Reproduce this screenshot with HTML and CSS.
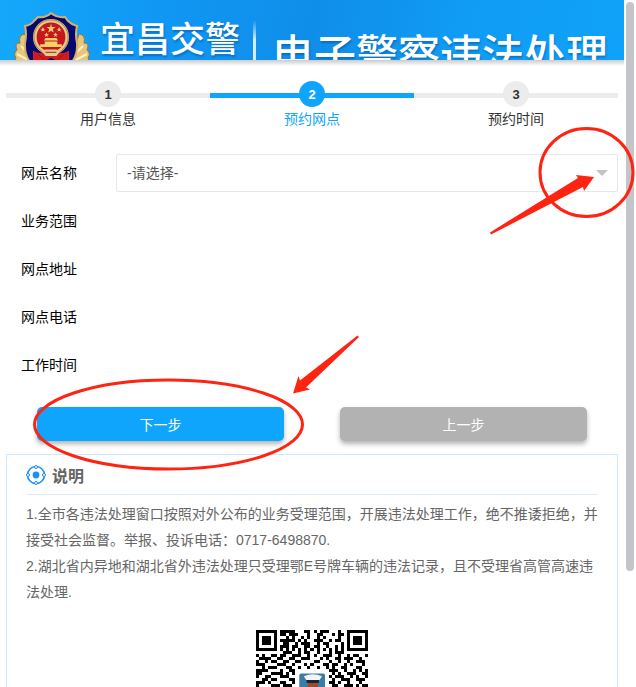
FILE: index.html
```html
<!DOCTYPE html>
<html lang="zh-CN">
<head>
<meta charset="UTF-8">
<meta name="viewport" content="width=device-width, initial-scale=1.0">
<title>宜昌交警 电子警察违法处理</title>
<link rel="stylesheet" href="styles.css">
</head>
<body>
<div class="page">
  <header class="banner">
    <!-- police emblem -->
    <svg class="emblem" viewBox="0 0 76 66" aria-hidden="true">
      <g fill="#e5c67f" stroke="#9b7634" stroke-width="1">
        <path d="M11 22Q4 23 6 31Q0 31 3 38Q-1 41 2 46Q-1 52 6 53Q8 61 20 61L34 65L18 46Z"/>
        <path d="M65 22Q72 23 70 31Q76 31 73 38Q77 41 74 46Q77 52 70 53Q68 61 56 61L42 65L58 46Z"/>
      </g>
      <path d="M7 34L18 45M3 42L20 51M6 51L22 56M69 34L58 45M73 42L56 51M70 51L54 56" stroke="#fff0bd" stroke-width="2" fill="none"/>
      <path d="M37 1Q43 6 51 5L54 9Q58 13 63 14Q61 22 63 31Q64 48 52 55L37 64L22 55Q10 48 11 31Q13 22 11 14Q17 13 20 9L24 5Q32 6 37 1Z" fill="#08096f" stroke="#d4b269" stroke-width="2"/>
      <g transform="translate(3.700 0.700) scale(0.900)">
        <circle cx="37" cy="27" r="18" fill="#c41720" stroke="#e9c987" stroke-width="4"/>
        <circle cx="37" cy="27" r="19" fill="none" stroke="#a57e3d" stroke-width="1"/>
        <g fill="#f6d168">
          <path d="M37 12L38 16H42L39 18L40 22L37 20L34 22L35 18L32 16H36Z"/>
          <path d="M28 16l1 2h2l-2 1 1 2-2-1-2 1 1-2-2-1h2zM46 16l1 2h2l-2 1 1 2-2-1-2 1 1-2-2-1h2zM32 22l1 2h2l-2 1 1 2-2-1-2 1 1-2-2-1h2zM42 22l1 2h2l-2 1 1 2-2-1-2 1 1-2-2-1h2z"/>
          <path d="M31 28H43L45 31H29ZM30 32H44V35H49V38H25V35H30Z"/>
        </g>
        <path d="M17 42Q25 47 30 43H44Q49 47 57 42V53L46 55L37 50L28 55L17 53Z" fill="#cf1c21"/>
        <path d="M27 43L31 41H43L47 43L43 48H31Z" fill="#e9c987"/>
        <path d="M31 44H43M23 47L30 52M51 47L44 52" stroke="#8f1b19" stroke-width="1"/>
      </g>
    </svg>
    <h1 class="brand">宜昌交警</h1>
    <span class="banner-line"></span>
    <p class="slogan">电子警察违法处理</p>
  </header>

  <main class="content">
    <ol class="steps">
      <li class="step"><span class="step-num">1</span><span class="step-text">用户信息</span></li>
      <li class="step active" aria-current="step"><span class="step-num">2</span><span class="step-text">预约网点</span></li>
      <li class="step"><span class="step-num">3</span><span class="step-text">预约时间</span></li>
    </ol>

    <form class="form">
      <div class="row">
        <label class="row-label" for="site">网点名称</label>
        <div class="select-box">
          <select id="site" name="site">
            <option>-请选择-</option>
          </select>
        </div>
      </div>
      <div class="row"><span class="row-label">业务范围</span></div>
      <div class="row"><span class="row-label">网点地址</span></div>
      <div class="row"><span class="row-label">网点电话</span></div>
      <div class="row"><span class="row-label">工作时间</span></div>
      <div class="buttons">
        <button class="btn btn-next" type="button">下一步</button>
        <button class="btn btn-prev" type="button">上一步</button>
      </div>
    </form>

    <section class="notice">
      <h2 class="notice-title">
        <svg class="notice-icon" viewBox="0 0 20 20" aria-hidden="true">
          <circle cx="10" cy="10" r="8.500" fill="none" stroke="#1890ff" stroke-width="1.600"/>
          <circle cx="10" cy="10" r="3.400" fill="#1890ff"/>
          <g fill="#fff" stroke="#1890ff" stroke-width="1">
            <circle cx="10" cy="2" r="1.500"/><circle cx="18" cy="10" r="1.500"/>
            <circle cx="10" cy="18" r="1.500"/><circle cx="2" cy="10" r="1.500"/>
          </g>
        </svg>
        说明
      </h2>
      <div class="notice-text">
        <p>1.全市各违法处理窗口按照对外公布的业务受理范围，开展违法处理工作，绝不推诿拒绝，并接受社会监督。举报、投诉电话：0717-6498870.</p>
        <p>2.湖北省内异地和湖北省外违法处理只受理鄂E号牌车辆的违法记录，且不受理省高管高速违法处理.</p>
      </div>
      <svg class="qrcode" viewBox="0 0 37 37" role="img" aria-label="二维码" shape-rendering="crispEdges">
        <!-- finder patterns -->
        <path d="M0 0h7v7H0zM1 1v5h5V1zM2 2h3v3H2zM30 0h7v7h-7zM31 1v5h5V1zM32 2h3v3h-3zM0 30h7v7H0zM1 31v5h5v-5zM2 32h3v3H2z" fill-rule="evenodd"/>
        <!-- data modules, one line of strokes for each row -->
        <path fill="none" stroke="#000" stroke-width="1" d="
          M8 .5h5M16 .5h2M19 .5h1M21 .5h3M27 .5h1
          M8 1.5h2M11 1.5h3M17 1.5h1M20 1.5h2M25 1.5h1M27 1.5h2
          M10 2.5h1M12 2.5h1M15 2.5h1M17 2.5h1M20 2.5h1M22 2.5h1M27 2.5h1
          M8 3.5h5M14 3.5h1M16 3.5h1M19 3.5h3M24 3.5h1M26 3.5h2
          M9 4.5h2M13 4.5h1M15 4.5h3M20 4.5h1M22 4.5h2M28 4.5h1
          M8 5.5h3M12 5.5h2M16 5.5h2M19 5.5h2M23 5.5h1M26 5.5h1M28 5.5h1
          M8 6.5h1M10 6.5h1M12 6.5h1M14 6.5h1M16 6.5h1M18 6.5h1M20 6.5h1M22 6.5h1M24 6.5h1M26 6.5h1M28 6.5h1
          M9 7.5h3M14 7.5h1M16 7.5h2M20 7.5h1M24 7.5h1M26 7.5h3
          M0 8.5h1M2 8.5h1M5 8.5h2M8 8.5h2M12 8.5h3M17 8.5h1M19 8.5h1M22 8.5h3M27 8.5h1M30 8.5h1M32 8.5h2M36 8.5h1
          M1 9.5h4M7 9.5h2M11 9.5h2M15 9.5h3M21 9.5h1M23 9.5h1M26 9.5h2M29 9.5h3M34 9.5h1
          M0 10.5h1M3 10.5h1M5 10.5h2M9 10.5h2M13 10.5h2M19 10.5h2M24 10.5h1M27 10.5h1M30 10.5h1M33 10.5h3
          M0 11.5h3M7 11.5h3M12 11.5h1M16 11.5h1M18 11.5h1M22 11.5h2M25 11.5h2M29 11.5h1M31 11.5h1M35 11.5h1
          M2 12.5h1M4 12.5h3M10 12.5h2M14 12.5h1M17 12.5h1M20 12.5h1M23 12.5h1M25 12.5h1M28 12.5h2M33 12.5h2
          M0 13.5h4M8 13.5h1M11 13.5h2M24 13.5h3M29 13.5h1M32 13.5h1M34 13.5h1M36 13.5h1
          M0 14.5h2M5 14.5h4M10 14.5h1M12 14.5h1M25 14.5h1M27 14.5h1M30 14.5h3M35 14.5h2
          M0 15.5h1M3 15.5h2M8 15.5h3M24 15.5h1M26 15.5h3M31 15.5h1M33 15.5h1M36 15.5h1
          M2 16.5h2M5 16.5h2M11 16.5h2M25 16.5h1M28 16.5h3M33 16.5h3
          M0 17.5h3M4 17.5h1M8 17.5h2M12 17.5h1M24 17.5h2M27 17.5h1M30 17.5h1M34 17.5h1
          M0 18.5h1M5 18.5h3M9 18.5h3M25 18.5h2M29 18.5h3M33 18.5h1M35 18.5h2
          M1 19.5h3M7 19.5h1M11 19.5h2M24 19.5h1M27 19.5h3M32 19.5h2
          M0 20.5h2M5 20.5h2M9 20.5h2M25 20.5h3M30 20.5h1M34 20.5h3
          M3 21.5h1M5 21.5h4M11 21.5h1M24 21.5h2M28 21.5h2M33 21.5h1
          M0 22.5h1M2 22.5h2M8 22.5h1M10 22.5h2M26 22.5h1M29 22.5h4M35 22.5h1"/>
        <!-- officer portrait -->
        <g shape-rendering="auto">
          <rect x="13.5" y="13.7" width="10" height="10" rx="1" fill="#fff"/>
          <rect x="14.3" y="14.4" width="8.5" height="8.5" rx=".6" fill="#3b7ba5"/>
          <path d="M17 16.5h3.6l-.3 3.5-1.4 1-1.5-1z" fill="#9b4b2b"/>
          <path d="M16.6 16.2h4.2v1.3h-4z" fill="#182535"/>
          <path d="M15.8 15.3q3-1.4 6 0l-.8 1.2h-4.4z" fill="#f2f5f5"/>
          <path d="M15.5 22.9q.2-2.7 2.3-3.3h2.2q2 .6 2.2 3.3z" fill="#142b35"/>
        </g>
      </svg>
    </section>
  </main>
</div>

<div class="scroll-thumb"></div>

<!-- red guide marks over the form -->
<svg class="marks" width="636" height="687" viewBox="0 0 636 687" aria-hidden="true">
  <g fill="none" stroke="#ff2312" stroke-width="3">
    <ellipse cx="586.5" cy="172.500" rx="46.500" ry="44"/>
    <ellipse cx="168.500" cy="424.500" rx="134" ry="44.500"/>
  </g>
  <g fill="#ff2312">
    <path d="M490 232.500L578 178L576 175L594 177L584 191L583 187L491 234.500Z"/>
    <path d="M357.500 335.500L359 337L306 387.500L310 389.500L293 393.500L298.500 376L300 380.500Z"/>
  </g>
</svg>
</body>
</html>
```
FILE: styles.css
```css
* {
  box-sizing: border-box;
}

html, body {
  margin: 0;
  height: 100%;
  overflow: hidden;
}

body {
  background: #fff;
  color: #333;
  font-family: "Liberation Sans", "Noto Sans CJK SC", sans-serif;
  font-size: 14px;
}

h1, h2, p, ol {
  margin: 0;
  padding: 0;
}

/* room on the right for the scrollbar */
.page {
  padding-right: 12px;
}

/* Banner */
.banner {
  display: flex;
  align-items: flex-start;
  height: 60px;
  padding-left: 14px;
  overflow: hidden;
  color: #fff;
  background: linear-gradient(100deg, #14a9fb, #1097f4 25%, #0f8ee9 50%, #109cf5 75%, #10a2fa);
  text-shadow: 1px 2px 2px rgba(0, 60, 130, 0.4);
}

/* shadow sits below the clipped banner */
.content::before {
  content: "";
  display: block;
  height: 6px;
  margin: 0 -6px;
  background: linear-gradient(#cbcbcb, #fff);
}

.emblem {
  flex: none;
  width: 76px;
  height: 66px;
  margin-top: 12px;
}

.brand {
  flex: none;
  margin: 20px 0 0 10px;
  font-size: 35px;
  font-weight: 500;
  line-height: 40px;
}

.banner-line {
  flex: none;
  width: 3px;
  height: 40px;
  margin: 20px 16px 0 13px;
  background: linear-gradient(transparent, #d5efff 50%);
}

.slogan {
  flex: none;
  margin-top: 32px;
  font-size: 42px;
  font-weight: 500;
  line-height: 48px;
  white-space: nowrap;
}

.content {
  padding: 0 6px;
}

/* Steps */
.steps {
  display: flex;
  margin-top: 15px;
  list-style: none;
}

.step {
  flex: 1;
  display: flex;
  flex-direction: column;
  align-items: center;
  background: linear-gradient(#ececec, #ececec) 0 12px / 100% 5px no-repeat;
}

.step-num {
  width: 26px;
  height: 26px;
  border-radius: 50%;
  background: #ececec;
  font-size: 13px;
  font-weight: bold;
  line-height: 28px;
  text-align: center;
}

.step-text {
  line-height: 24px;
}

.step.active {
  color: #10a5fd;
  background-image: linear-gradient(#10a5fd, #10a5fd);
}

.step.active .step-num {
  background: #10a5fd;
  color: #fff;
}

/* Form */
.form {
  padding-top: 23px;
}

.row {
  display: flex;
  align-items: center;
  height: 38px;
  margin-bottom: 10px;
}

.row-label {
  width: 110px;
  padding: 0 0 2px 15px;
  color: #000;
}

.select-box {
  position: relative;
  flex: 1;
}

.select-box select {
  display: block;
  width: 100%;
  height: 38px;
  padding: 0 30px 0 10px;
  border: 1px solid #e6e6e6;
  border-radius: 2px;
  background: #fff;
  color: #555;
  font: inherit;
  appearance: none;
}

.select-box::after {
  content: "";
  position: absolute;
  top: 16px;
  right: 10px;
  border: 6px solid transparent;
  border-top-color: #c2c2c2;
  border-bottom: 0;
  pointer-events: none;
}

.buttons {
  display: flex;
  gap: 56px;
  padding: 13px 31px;
}

.btn {
  flex: 1;
  height: 34px;
  border: 0;
  border-radius: 5px;
  color: #fff;
  font: inherit;
  box-shadow: 0 3px 5px rgba(0, 0, 0, 0.3);
}

.btn-next {
  background: #10a5fd;
}

.btn-prev {
  background: #b2b2b2;
}

/* Notice */
.notice {
  padding: 0 19px 40px;
  border: 1px solid #cdebfc;
  color: #666;
}

.notice-title {
  display: flex;
  align-items: center;
  gap: 6px;
  height: 40px;
  border-bottom: 1px solid #e0ecf5;
  font-size: 16px;
}

.notice-icon {
  width: 20px;
  height: 20px;
}

.notice-text {
  padding-top: 6px;
  line-height: 26px;
}

.qrcode {
  display: block;
  width: 112px;
  height: 112px;
  margin: 25px auto 0;
}

.scroll-thumb {
  position: fixed;
  top: 2px;
  right: 2px;
  width: 8px;
  height: 569px;
  border-radius: 4px;
  background: #c4c4cb;
}

.marks {
  position: absolute;
  top: 0;
  left: 0;
  pointer-events: none;
}
```
